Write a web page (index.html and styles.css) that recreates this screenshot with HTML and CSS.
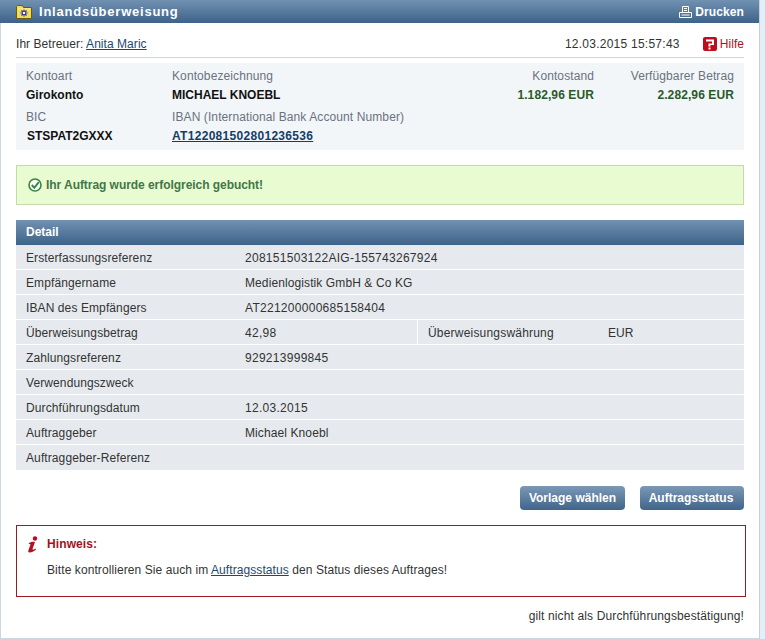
FILE: index.html
```html
<!DOCTYPE html>
<html lang="de">
<head>
<meta charset="utf-8">
<title>Inlandsüberweisung</title>
<link rel="stylesheet" href="styles.css">
</head>
<body>
<div class="panel">
  <header class="titlebar">
    <div class="title">
      <svg class="folder" width="16" height="14" viewBox="0 0 16 14"><path d="M.5 13.500V1.500L1.500.5h5l1 2h8v11z" fill="#f1dc55" stroke="#6a5a18"/><path d="M1.500 3.500h13v1H1.500z" fill="#fdf3a0"/><path d="M8 4.500v7M4.500 8h7M5.500 5.500l5 5M10.500 5.500l-5 5" stroke="#2626b0" stroke-width="1.100"/><circle cx="8" cy="8" r="1.200" fill="#fff"/></svg>
      <span>Inlandsüberweisung</span>
    </div>
    <div class="print">
      <svg width="13" height="12" viewBox="0 0 13 12"><path d="M3.500 6.500V.5h6v6M.5 11.500v-5h12v5zM5 2.500h3M5 4.500h3M2.500 9h8" fill="none" stroke="#fff"/></svg>
      <span>Drucken</span>
    </div>
  </header>
  <main class="content">
    <div class="metaline">
      <div>Ihr Betreuer: <a href="#">Anita Maric</a></div>
      <div class="metaright">
        <span class="stamp">12.03.2015 15:57:43</span>
        <span class="help">
          <svg width="14" height="14" viewBox="0 0 14 14"><rect width="14" height="14" rx="2" fill="#c00d1e"/><path d="M3 2.500h8v5.500H7.500v1.500h-2V6.500H9V4.500H3zM5.500 10.500h2v2h-2z" fill="#fff"/></svg>
          Hilfe
        </span>
      </div>
    </div>
    <section class="account">
      <div class="col c1">
        <div class="lbl">Kontoart</div><div class="val">Girokonto</div>
        <div class="lbl">BIC</div><div class="val bic">STSPAT2GXXX</div>
      </div>
      <div class="col c2">
        <div class="lbl">Kontobezeichnung</div><div class="val">MICHAEL KNOEBL</div>
        <div class="lbl">IBAN (International Bank Account Number)</div><div class="val num"><a href="#">AT122081502801236536</a></div>
      </div>
      <div class="col c3">
        <div class="lbl">Kontostand</div><div class="val money">1.182,96 EUR</div>
      </div>
      <div class="col c4">
        <div class="lbl">Verfügbarer Betrag</div><div class="val money">2.282,96 EUR</div>
      </div>
    </section>
    <div class="success">
      <svg width="14" height="14" viewBox="0 0 14 14"><circle cx="7" cy="7" r="6" fill="#fff" stroke="#37853f" stroke-width="1.600"/><path d="M3.800 7l2.500 2.800L10.800 4.200" fill="none" stroke="#37853f" stroke-width="2"/></svg>
      <span>Ihr Auftrag wurde erfolgreich gebucht!</span>
    </div>
    <section class="detail">
      <h2>Detail</h2>
      <div class="row"><div class="k">Ersterfassungsreferenz</div><div class="v num">208151503122AIG-155743267924</div></div>
      <div class="row"><div class="k">Empfängername</div><div class="v">Medienlogistik GmbH &amp; Co KG</div></div>
      <div class="row"><div class="k">IBAN des Empfängers</div><div class="v num">AT221200000685158404</div></div>
      <div class="row">
        <div class="k">Überweisungsbetrag</div><div class="v half num">42,98</div>
        <div class="k k2">Überweisungswährung</div><div class="v">EUR</div>
      </div>
      <div class="row"><div class="k">Zahlungsreferenz</div><div class="v num">929213999845</div></div>
      <div class="row"><div class="k">Verwendungszweck</div><div class="v"></div></div>
      <div class="row"><div class="k">Durchführungsdatum</div><div class="v num">12.03.2015</div></div>
      <div class="row"><div class="k">Auftraggeber</div><div class="v">Michael Knoebl</div></div>
      <div class="row"><div class="k">Auftraggeber-Referenz</div><div class="v"></div></div>
    </section>
    <div class="actions">
      <button type="button" class="b1">Vorlage wählen</button>
      <button type="button" class="b2">Auftragsstatus</button>
    </div>
    <section class="notice">
      <div class="nhead">
        <svg width="12" height="17" viewBox="0 0 12 17"><circle cx="8" cy="2.500" r="2.200" fill="#b5101c"/><path d="M1.500 7.500C3 6 6 5.500 8 6L5.500 13c0 1 1 1 3-.5l.5 1C7 15.500 4.500 16.500 2.500 16.500 1 16.500 1 15 1.500 14L3.500 8.500z" fill="#b5101c"/></svg>
        <strong>Hinweis:</strong>
      </div>
      <p>Bitte kontrollieren Sie auch im <a href="#">Auftragsstatus</a> den Status dieses Auftrages!</p>
    </section>
    <div class="foot">gilt nicht als Durchführungsbestätigung!</div>
  </main>
</div>
</body>
</html>
```
FILE: styles.css
```css
html, body { margin: 0; padding: 0; }
body {
  background: #e3eef8;
  font-family: "Liberation Sans", Arial, sans-serif;
  font-size: 12px;
  letter-spacing: .1px;
  color: #222;
  height: 639px;
  overflow: hidden;
}
a { color: #1c4a6e; text-decoration: underline; }
.num { letter-spacing: .28px; }
.panel {
  width: 759px;
  height: 638px;
  background: #fff;
  border-right: 1px solid #c9cfd6;
  border-bottom: 1px solid #ccd6e0;
}
.titlebar {
  height: 23px;
  background: linear-gradient(#7191b1, #3d6389);
  color: #fff;
  font-weight: bold;
  display: flex;
  justify-content: space-between;
  align-items: center;
  padding: 0 15px 0 16px;
}
.title { display: flex; align-items: center; gap: 7px; font-size: 13px; letter-spacing: .77px; }
.print { display: flex; align-items: center; gap: 3px; }
.content {
  height: 615px;
  box-sizing: border-box;
  border-left: 1px solid #ccd6e0;
  padding: 0 15px 0 15px;
}
.metaline {
  height: 34px;
  border-bottom: 1px solid #d3d6d9;
  display: flex;
  justify-content: space-between;
  align-items: flex-end;
  color: #333;
  letter-spacing: .05px;
}
.metaline > div { margin-bottom: 6px; }
.metaright { display: flex; align-items: center; }
.stamp { margin-right: 23px; letter-spacing: .25px; }
.help { display: flex; align-items: center; gap: 3px; color: #b01020; }
.account {
  margin-top: 5px;
  height: 87px;
  background: #f3f6f9;
  display: flex;
  padding: 4px 10px 0;
  box-sizing: border-box;
}
.lbl { color: #6a7280; height: 19px; line-height: 19px; }
.val { font-weight: bold; color: #111; height: 19px; line-height: 19px; margin-bottom: 3px; letter-spacing: 0; }
.val.num { letter-spacing: .3px; }
.bic { padding-left: 1px; }
.val a { color: #143e66; }
.money { color: #2a5a2a; letter-spacing: .1px; }
.c1 { width: 146px; }
.c2 { width: 290px; }
.c3 { width: 132px; text-align: right; }
.c4 { width: 140px; text-align: right; }
.success {
  margin-top: 15px;
  height: 40px;
  box-sizing: border-box;
  background: #e9fbd0;
  border: 1px solid #c4dba8;
  display: flex;
  align-items: center;
  gap: 4px;
  padding-left: 11px;
  color: #41774a;
  font-weight: bold;
  letter-spacing: -.05px;
}
.detail { margin-top: 15px; }
.detail h2 {
  margin: 0;
  height: 25px;
  line-height: 25px;
  padding-left: 10px;
  font-size: 12px;
  letter-spacing: 0;
  color: #fff;
  background: linear-gradient(#7191b1, #3d6389);
}
.row {
  height: 25px;
  box-sizing: border-box;
  background: #e6eaee;
  border-bottom: 1px solid #fff;
  padding-top: 1px;
  display: flex;
  align-items: center;
  color: #333;
}
.row:last-child { border-bottom-color: #e6eaee; }
.k { width: 219px; padding-left: 10px; }
.k2 { width: 171px; align-self: stretch; margin-top: -1px; padding-top: 1px; padding-left: 10px; display: flex; align-items: center; border-left: 1px solid #fff; letter-spacing: .2px; }
.row .k2 { width: 180px; }
.half { width: 172px; }
.actions {
  margin-top: 16px;
  display: flex;
  justify-content: flex-end;
  gap: 15px;
}
.actions button {
  height: 24px;
  border: 0;
  border-radius: 4px;
  padding: 0;
  background: linear-gradient(#7c98b6, #3f6589);
  color: #fff;
  font: bold 12px "Liberation Sans", Arial, sans-serif;
}
.b1 { width: 105px; }
.actions .b2 { width: 104px; padding-right: 2px; }
.notice {
  margin-top: 15px;
  width: 730px;
  height: 72px;
  box-sizing: border-box;
  border: 1px solid #9c1a20;
  padding: 9px 0 0 10px;
}
.nhead { display: flex; align-items: center; gap: 8px; color: #a5101c; height: 18px; }
.notice p { margin: 8px 0 0 20px; line-height: 18px; color: #333; letter-spacing: .08px; }
.foot { margin-top: 12px; text-align: right; color: #333; letter-spacing: .13px; }
```
